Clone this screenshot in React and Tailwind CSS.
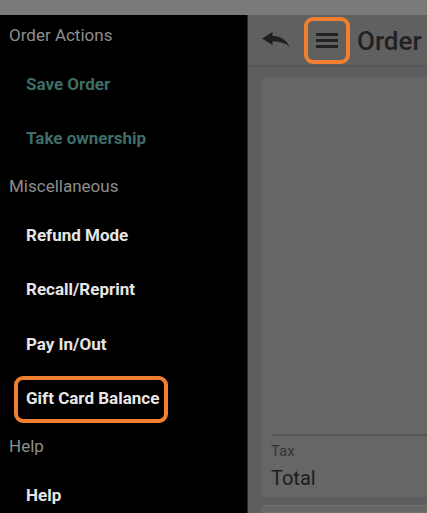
import React from "react";

const Section = ({ title }) => (
  <div className="h-[42px] shrink-0 flex items-center pl-[9px] text-[17px] text-[#8e8e8e]">{title}</div>
);

const Item = ({ label, muted, highlight }) => (
  <div
    className={`relative h-[54.5px] shrink-0 flex items-center pl-[26px] text-[17px] font-bold ${
      muted ? "text-[#3f6d68]" : "text-[#e6e6e6]"
    }`}
  >
    {highlight && (
      <div className="absolute left-[14px] top-[4px] w-[154px] h-[47px] border-[4px] border-[#f0802f] rounded-[9px]" />
    )}
    <span className="relative">{label}</span>
  </div>
);

const BackIcon = () => (
  <svg width="28" height="15" viewBox="0 0 28 15" className="text-[#1f1f1f]">
    <path
      d="M0 6.5 L10.5 0 V4 C19 4 24.5 8 27.5 15 C23.5 10.8 18 9.5 10.5 9.5 V13 Z"
      fill="currentColor"
    />
  </svg>
);

export default function App() {
  return (
    <div className="w-[427px] h-[513px] overflow-hidden flex flex-col bg-black font-['Roboto',sans-serif]">
      <div className="h-[15px] shrink-0 bg-[#7a7a7a]" />
      <div className="flex flex-1 min-h-0">
        <aside className="w-[247px] shrink-0 bg-black flex flex-col overflow-hidden">
          <Section title="Order Actions" />
          <Item label="Save Order" muted />
          <Item label="Take ownership" muted />
          <Section title="Miscellaneous" />
          <Item label="Refund Mode" />
          <Item label="Recall/Reprint" />
          <Item label="Pay In/Out" />
          <Item label="Gift Card Balance" highlight />
          <Section title="Help" />
          <Item label="Help" />
        </aside>
        <main className="flex-1 flex flex-col bg-[#5c5e60] border-l border-[#2a2a2a] min-w-0">
          <header className="h-[52px] shrink-0 bg-[#606060] border-b-2 border-[#585858] flex items-start">
            <div className="ml-[14px] mt-[17px]">
              <BackIcon />
            </div>
            <button className="ml-[14px] mt-[2px] w-[46px] h-[47px] border-[4px] border-[#f0802f] rounded-[9px] flex flex-col items-center justify-center gap-[3px]">
              <span className="block w-[22px] h-[3px] bg-[#222]" />
              <span className="block w-[22px] h-[3px] bg-[#222]" />
              <span className="block w-[22px] h-[3px] bg-[#222]" />
            </button>
            <span className="ml-[7px] mt-[9px] text-[26px] font-medium leading-[34px] text-[#222] whitespace-nowrap">
              Order
            </span>
          </header>
          <div className="flex-1 pl-[13px] pt-[11px] flex flex-col gap-[8px] min-h-0">
            <div className="h-[419px] shrink-0 bg-[#666666] rounded-l-[4px] flex flex-col justify-end pl-[10px] pb-[2px]">
              <div className="border-t-2 border-[#575757] pt-[5px]">
                <div className="text-[15px] text-[#353535] leading-[20px]">Tax</div>
                <div className="text-[20px] text-[#1c1c1c] leading-[34px]">Total</div>
              </div>
            </div>
            <div className="flex-1 bg-[#666666] border border-[#6e6e6e] rounded-l-[4px]" />
          </div>
        </main>
      </div>
    </div>
  );
}
